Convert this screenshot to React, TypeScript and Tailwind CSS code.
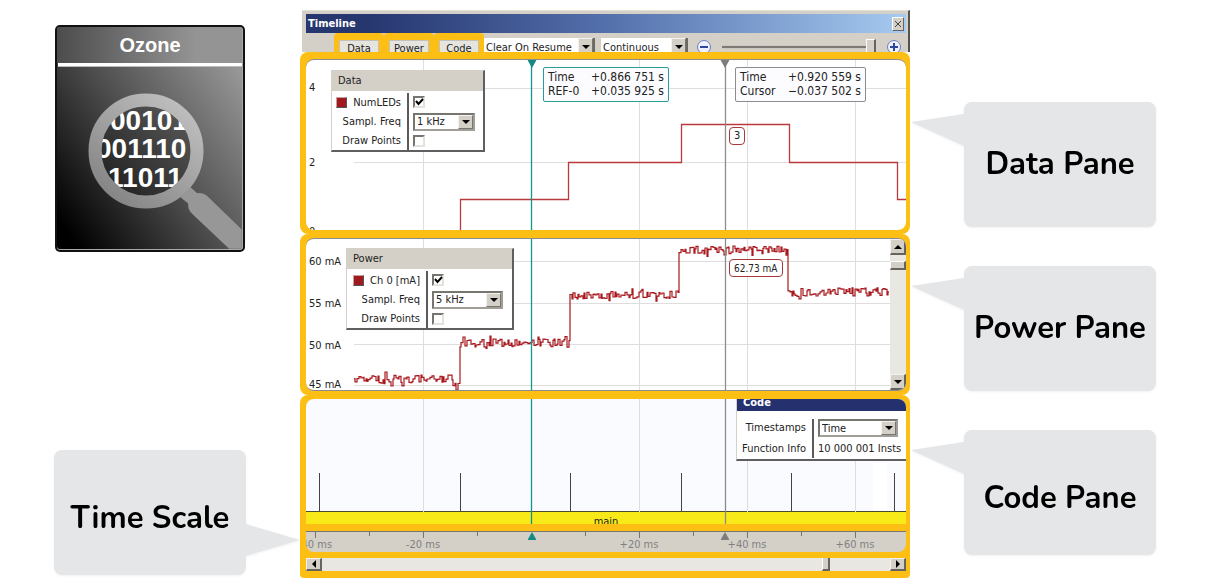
import type { ReactNode } from 'react';

const UI_FONT = "font-['DejaVu_Sans_Condensed','Noto_Sans',sans-serif]";

// Plot coordinates: 600 units wide, 0 ms sits at x = 225, 20 ms = 108 units
const GRID_X = [117, 333, 441, 549];
const REF_X = 225;
const CURSOR_X = 419;

const SCALE_LABELS = [
  { x: 9, text: '-40 ms' },
  { x: 117, text: '-20 ms' },
  { x: 333, text: '+20 ms' },
  { x: 441, text: '+40 ms' },
  { x: 549, text: '+60 ms' },
];
const MINOR_TICKS = [63, 171, 279, 387, 495];
const CODE_SPIKES = [13, 154, 264, 375, 485, 588];

const POWER_LEVELS = [
  { from: 48, to: 149, y: 140 },
  { from: 149, to: 154, y: 147 },
  { from: 154, to: 264, y: 104 },
  { from: 264, to: 373, y: 56 },
  { from: 373, to: 482, y: 11 },
  { from: 482, to: 583, y: 53 },
];

/** Stepped noise around each current level, seeded so it never changes. */
function powerPath(): string {
  let seed = 11;
  const rand = () => {
    seed = (seed * 16807) % 2147483647;
    return seed / 2147483647;
  };
  let d = '';
  for (const { from, to, y } of POWER_LEVELS) {
    for (let x = from; x < to; x += rand() > 0.4 ? 2 : 1) {
      const spread = rand() > 0.8 ? 14 : 8;
      const level = Math.round((y + (rand() - 0.5) * spread) * 10) / 10;
      d += d ? `H${x}V${level}` : `M${x} ${level}`;
    }
    d += `H${to}`;
  }
  return d;
}

const POWER_PATH = powerPath();

interface PlotProps {
  height: number;
  rows: number[];
  rowEnd?: number;
  children?: ReactNode;
}

function Plot({ height, rows, rowEnd = 600, children }: PlotProps) {
  return (
    <svg
      className="block h-full w-full"
      viewBox={`0 0 600 ${height}`}
      preserveAspectRatio="none"
      fill="none"
      aria-hidden="true"
    >
      <g stroke="#dedede">
        {GRID_X.map((x) => (
          <path key={x} d={`M${x}.5 0V${height}`} />
        ))}
        {rows.map((y) => (
          <path key={y} d={`M48 ${y}.5H${rowEnd}`} />
        ))}
      </g>
      {children}
      <path d={`M${REF_X}.5 0V${height}`} stroke="#0f9692" strokeWidth="1.300" />
      <path d={`M${CURSOR_X}.5 0V${height}`} stroke="#8c8c8c" strokeWidth="1.300" />
    </svg>
  );
}

function AxisLabels({ labels }: { labels: { y: number; text: string }[] }) {
  return (
    <>
      {labels.map(({ y, text }) => (
        <span
          key={text}
          className="absolute left-[3px] -translate-y-1/2 leading-4"
          style={{ top: y }}
        >
          {text}
        </span>
      ))}
    </>
  );
}

interface FrameProps {
  className: string;
  children: ReactNode;
}

/** Amber outline around one section of the timeline window. */
function Frame({ className, children }: FrameProps) {
  return <section className={`bg-[#fdbf13] pl-1.5 pr-1 ${className}`}>{children}</section>;
}

interface DropDownProps {
  id?: string;
  label?: string;
  value: string;
  className: string;
  flat?: boolean;
}

function DropDown({ id, label, value, className, flat = false }: DropDownProps) {
  const edge = flat
    ? 'border-r-2 border-[#6b6963]'
    : 'border-2 border-t-[#77756f] border-l-[#77756f] border-r-[#a19e97] border-b-[#a19e97]';
  return (
    <div className={`relative h-[18px] bg-white ${edge} ${className}`}>
      <select
        id={id}
        aria-label={label}
        className="block h-full w-full appearance-none bg-transparent pl-0.5 leading-none outline-none"
      >
        <option>{value}</option>
      </select>
      <span className="pointer-events-none absolute inset-y-0 right-0 flex w-[15px] items-center justify-center border border-t-[#f4f2ee] border-l-[#f4f2ee] border-r-[#77756f] border-b-[#77756f] bg-[#d4d0c8]">
        <svg width="8" height="4" viewBox="0 0 8 4" aria-hidden="true">
          <path d="M0 0H8L4 4Z" />
        </svg>
      </span>
    </div>
  );
}

function CheckBox({ id, checked = false }: { id: string; checked?: boolean }) {
  return (
    <span className="relative block size-3">
      <input
        id={id}
        type="checkbox"
        defaultChecked={checked}
        className="peer block size-3 appearance-none border-2 border-t-[#77756f] border-l-[#77756f] border-r-[#e4e2dc] border-b-[#e4e2dc] bg-white"
      />
      <svg
        className="pointer-events-none absolute inset-0 hidden size-3 peer-checked:block"
        viewBox="0 0 12 12"
        fill="none"
        aria-hidden="true"
      >
        <path d="M3 5L5.500 8L10 3" stroke="#000" strokeWidth="2" />
      </svg>
    </span>
  );
}

interface SettingsPanelProps {
  id: string;
  title: string;
  signal: string;
  freq: string;
  className: string;
  labelClass: string;
  selectClass: string;
}

function SettingsPanel({
  id,
  title,
  signal,
  freq,
  className,
  labelClass,
  selectClass,
}: SettingsPanelProps) {
  return (
    <div
      className={`absolute border border-t-[#d4d0c8] border-l-[#d4d0c8] border-r-2 border-b-2 border-r-[#5f5f5f] border-b-[#5f5f5f] bg-white ${className}`}
    >
      <h2 className="h-5 bg-[#d4d0c8] pl-1.5 leading-5">{title}</h2>
      <div className="flex pt-0.5">
        <div
          className={`flex flex-col items-end border-r-2 border-[#5a5a5a] pr-1.5 leading-[19px] ${labelClass}`}
        >
          <label htmlFor={`${id}-on`} className="flex items-center gap-1.5">
            <span className="size-[11px] border border-r-[#555] border-b-[#555] border-t-[#c9a0a0] border-l-[#c9a0a0] bg-[#a0191f]" />
            {signal}
          </label>
          <label htmlFor={`${id}-freq`}>Sampl. Freq</label>
          <label htmlFor={`${id}-points`}>Draw Points</label>
        </div>
        <div className="ml-1 flex flex-col justify-between py-[3px]">
          <CheckBox id={`${id}-on`} checked />
          <DropDown id={`${id}-freq`} value={freq} className={selectClass} />
          <CheckBox id={`${id}-points`} />
        </div>
      </div>
    </div>
  );
}

interface ReadoutProps {
  rows: [string, string][];
  className: string;
}

function Readout({ rows, className }: ReadoutProps) {
  return (
    <dl
      className={`absolute top-[7px] h-[35px] rounded-xs border bg-[#fcfcff] px-1 py-0.5 text-[12px] leading-[14px] ${className}`}
    >
      {rows.map(([name, value]) => (
        <div key={name} className="flex justify-between whitespace-nowrap">
          <dt>{name}</dt>
          <dd>{value}</dd>
        </div>
      ))}
    </dl>
  );
}

function Badge({ className, children }: { className: string; children: ReactNode }) {
  return (
    <span
      className={`absolute left-[423px] flex h-[18px] items-center rounded border border-[#a83a3e] bg-white px-1 ${className}`}
    >
      {children}
    </span>
  );
}

function Marker({ className, up = false }: { className: string; up?: boolean }) {
  return (
    <svg
      className={`absolute -translate-x-1/2 ${className}`}
      width="9"
      height="8"
      viewBox="0 0 9 8"
      fill="currentColor"
      aria-hidden="true"
    >
      <path d={up ? 'M4.500 0L9 8H0Z' : 'M0 0H9L4.500 8Z'} />
    </svg>
  );
}

const ARROWS = {
  up: 'M0 6L4 2L8 6Z',
  down: 'M0 2L4 6L8 2Z',
  left: 'M6 0L2 4L6 8Z',
  right: 'M2 0L6 4L2 8Z',
};

function ScrollButton({ dir, className }: { dir: keyof typeof ARROWS; className: string }) {
  return (
    <button
      type="button"
      aria-label={`Scroll ${dir}`}
      className={`flex shrink-0 items-center justify-center border border-t-[#f4f2ee] border-l-[#f4f2ee] border-r-2 border-b-2 border-r-[#66645f] border-b-[#66645f] bg-[#d4d0c8] ${className}`}
    >
      <svg width="8" height="8" viewBox="0 0 8 8" aria-hidden="true">
        <path d={ARROWS[dir]} />
      </svg>
    </button>
  );
}

function ZoomButton({ sign }: { sign: 'minus' | 'plus' }) {
  return (
    <button type="button" aria-label={sign === 'minus' ? 'Zoom out' : 'Zoom in'}>
      <svg className="block" width="16" height="16" viewBox="0 0 16 16" fill="none" aria-hidden="true">
        <circle cx="8" cy="8" r="6.500" fill="#eef1fb" stroke="#6a7fc8" />
        <path d={sign === 'minus' ? 'M4 8H12' : 'M4 8H12M8 4V12'} stroke="#2c479f" strokeWidth="2" />
      </svg>
    </button>
  );
}

function PaneTab({ children }: { children: ReactNode }) {
  return (
    <div className="w-[50px] rounded-t bg-[#fdbf13] px-[5px] pt-[7px]">
      <button
        type="button"
        className="block h-[17px] w-full border border-[#c4c1ba] bg-[#e6e4df] leading-4"
      >
        {children}
      </button>
    </div>
  );
}

interface CalloutProps {
  side: 'left' | 'right';
  low?: boolean;
  children: ReactNode;
}

function Callout({ side, low = false, children }: CalloutProps) {
  return (
    <div
      className={`relative flex h-[125px] items-center justify-center rounded-lg bg-[#e5e6e8] font-['Nunito','Noto_Sans',sans-serif] text-[31px] font-bold whitespace-nowrap text-black drop-shadow-xs ${
        low ? 'pt-3' : ''
      }`}
    >
      {side === 'left' ? (
        <svg className="absolute top-3 right-full" width="53" height="32" viewBox="0 0 53 32" aria-hidden="true">
          <path d="M0 8L53 0V32Z" fill="#e5e6e8" />
        </svg>
      ) : (
        <svg className="absolute top-[74px] left-full" width="54" height="32" viewBox="0 0 54 32" aria-hidden="true">
          <path d="M0 0L54 16L0 32Z" fill="#e5e6e8" />
        </svg>
      )}
      {children}
    </div>
  );
}

function OzoneLogo() {
  return (
    <svg
      className="mx-auto block"
      width="190"
      height="227"
      viewBox="0 0 190 227"
      fontFamily="'Liberation Sans', Arial, sans-serif"
      fontWeight="700"
      role="img"
      aria-label="Ozone"
    >
      <defs>
        <linearGradient id="card" x1="0.950" y1="0.150" x2="0.050" y2="0.920">
          <stop offset="0" stopColor="#979797" />
          <stop offset="0.500" stopColor="#4f4f4f" />
          <stop offset="1" stopColor="#000" />
        </linearGradient>
        <linearGradient id="head" x1="0" y1="0" x2="1" y2="0">
          <stop offset="0" stopColor="#4c4c4c" />
          <stop offset="0.750" stopColor="#949494" />
          <stop offset="1" stopColor="#949494" />
        </linearGradient>
        <linearGradient id="ring" x1="1" y1="0" x2="0.200" y2="1">
          <stop offset="0" stopColor="#c4c4c4" />
          <stop offset="1" stopColor="#858585" />
        </linearGradient>
        <linearGradient id="glass" x1="1" y1="0" x2="0" y2="1">
          <stop offset="0" stopColor="#5c5c5c" />
          <stop offset="1" stopColor="#1c1c1c" />
        </linearGradient>
        <clipPath id="lens">
          <circle cx="91" cy="126" r="45" />
        </clipPath>
      </defs>
      <rect width="190" height="227" rx="5" fill="#111" />
      <rect x="2" y="2" width="186" height="223" rx="3" fill="#a8a8a8" />
      <rect x="2" y="2" width="185" height="222" rx="3" fill="url(#card)" />
      <path d="M2 38V5Q2 2 5 2H184Q187 2 187 5V38Z" fill="url(#head)" />
      <rect x="3" y="38" width="184" height="3" fill="#fff" />
      <rect x="3" y="41" width="184" height="1" fill="#bbb" />
      <text x="95" y="27" fontSize="20" fill="#fff" textAnchor="middle">
        Ozone
      </text>
      <path
        transform="translate(-15 -15) scale(0.333)"
        d="M422 562L445 581Q443 598 456 611L568 717H606V659L506 562Q490 547 472 550L452 532Z"
        fill="#979797"
      />
      <circle cx="91" cy="126" r="45" fill="url(#glass)" />
      <g clipPath="url(#lens)" fontSize="28" fill="#fff">
        <text x="55" y="105">00101</text>
        <text x="41" y="133">001110</text>
        <text x="39" y="162">111011</text>
        <text x="86" y="190">1</text>
      </g>
      <circle cx="91" cy="126" r="51" fill="none" stroke="url(#ring)" strokeWidth="13" />
    </svg>
  );
}

function TitleAndToolbar() {
  return (
    <header className="ml-0.5 border-t border-r-2 border-t-[#e3e1dc] border-r-[#55534f] bg-[#d4d0c8] pt-[3px]">
      <div className="mr-0.5 ml-1 flex h-[19px] items-center justify-between bg-linear-to-r from-[#26366f] from-10% via-[#5470ac] via-50% to-[#a6caf0] pr-0.5 pl-0.5">
        <h1 className="pt-0.5 text-[11px] font-bold text-white">Timeline</h1>
        <button
          type="button"
          aria-label="Close"
          className="flex h-3.5 w-3 items-center justify-center border border-t-white border-l-white border-r-[#66645f] border-b-[#66645f] bg-[#d4d0c8]"
        >
          <svg width="6" height="6" viewBox="0 0 6 6" stroke="#444" aria-hidden="true">
            <path d="M0 0L6 6M6 0L0 6" />
          </svg>
        </button>
      </div>
      <div className="flex h-[19px] items-start overflow-hidden pr-1.5 pl-8">
        <PaneTab>Data</PaneTab>
        <PaneTab>Power</PaneTab>
        <PaneTab>Code</PaneTab>
        <div className="flex min-w-0 flex-1 items-center gap-1.5 pt-[5px]">
          <DropDown label="Clear mode" value="Clear On Resume" className="w-[111px] shrink-0" flat />
          <DropDown label="Sample mode" value="Continuous" className="w-[87px] shrink-0" flat />
          <div className="ml-0.5 flex min-w-0 flex-1 items-center gap-2.5">
            <ZoomButton sign="minus" />
            <input
              type="range"
              aria-label="Zoom"
              defaultValue={100}
              className="h-4 min-w-0 flex-1 appearance-none bg-linear-to-b from-transparent from-40% via-[#55534f] via-50% to-transparent to-60% [&::-webkit-slider-thumb]:h-4 [&::-webkit-slider-thumb]:w-2.5 [&::-webkit-slider-thumb]:appearance-none [&::-webkit-slider-thumb]:border [&::-webkit-slider-thumb]:border-r-2 [&::-webkit-slider-thumb]:border-t-white [&::-webkit-slider-thumb]:border-l-white [&::-webkit-slider-thumb]:border-r-[#66645f] [&::-webkit-slider-thumb]:bg-[#d4d0c8]"
            />
            <ZoomButton sign="plus" />
          </div>
        </div>
      </div>
    </header>
  );
}

function DataPane() {
  return (
    <Frame className="rounded-lg pt-[7px] pb-1">
      <div className="relative h-[171px] overflow-hidden rounded-lg border-t border-[#8c8c8c] bg-white">
        <Plot height={170} rows={[28, 102]}>
          <path
            d="M154.500 178V139.500H262.500V102.500H375.500V64.500H483.500V102.500H591.500V139.500H600"
            stroke="#b8383c"
            strokeWidth="1.300"
          />
        </Plot>
        <AxisLabels
          labels={[
            { y: 28, text: '4' },
            { y: 103, text: '2' },
            { y: 172, text: '0' },
          ]}
        />
        <Marker className="top-0 left-[37.600%] text-[#138a84]" />
        <Marker className="top-0 left-[69.900%] text-[#7d7d7d]" />
        <SettingsPanel
          id="data"
          title="Data"
          signal="NumLEDs"
          freq="1 kHz"
          className="top-2.5 left-[25px] w-[154px]"
          labelClass="w-[77px]"
          selectClass="w-[62px]"
        />
        <Readout
          rows={[
            ['Time', '+0.866 751 s'],
            ['REF-0', '+0.035 925 s'],
          ]}
          className="left-[237px] w-[126px] border-[#2a9d99]"
        />
        <Readout
          rows={[
            ['Time', '+0.920 559 s'],
            ['Cursor', '−0.037 502 s'],
          ]}
          className="left-[429px] w-[131px] border-[#8c8c8c]"
        />
        <Badge className="top-[67px]">3</Badge>
      </div>
    </Frame>
  );
}

function PowerPane() {
  return (
    <Frame className="rounded-lg py-1">
      <div className="relative flex h-[153px] overflow-hidden rounded-lg border-y border-[#8c8c8c] bg-white">
        <div className="absolute inset-0">
          <Plot height={151} rows={[22, 64, 105, 146]} rowEnd={584}>
            <path d={POWER_PATH} stroke="#a8181e" strokeWidth="1.200" />
          </Plot>
        </div>
        <AxisLabels
          labels={[
            { y: 23, text: '60 mA' },
            { y: 65, text: '55 mA' },
            { y: 107, text: '50 mA' },
            { y: 146, text: '45 mA' },
          ]}
        />
        <SettingsPanel
          id="power"
          title="Power"
          signal="Ch 0 [mA]"
          freq="5 kHz"
          className="top-[9px] left-10 w-[168px]"
          labelClass="w-[81px]"
          selectClass="w-[71px]"
        />
        <Badge className="top-5 text-[10px]">62.73 mA</Badge>
        <div className="relative ml-auto flex w-4 flex-col bg-[#e9e7e2]">
          <ScrollButton dir="up" className="h-4" />
          <div className="mt-1.5 h-[9px] border border-t-white border-l-white border-r-2 border-b-2 border-r-[#66645f] border-b-[#66645f] bg-[#d4d0c8]" />
          <ScrollButton dir="down" className="mt-auto h-4" />
        </div>
      </div>
    </Frame>
  );
}

function CodePane() {
  return (
    <Frame className="rounded-t-lg pt-1 pb-[3px]">
      <div className="relative h-[125px] overflow-hidden rounded-t-lg bg-[#fafbfe]">
        <div className="absolute inset-x-0 bottom-0 h-[13px] border-t border-[#4a4a30] bg-[#f8ea18] text-center leading-5">
          main
        </div>
        <div className="absolute inset-0">
          <Plot height={125} rows={[]}>
            <path d="M117.500 113V125M333.500 113V125M441.500 113V125M549.500 113V125" stroke="#f8ea18" />
            <path d="M567 64H581V111H567Z" fill="#fff" />
            <path d={CODE_SPIKES.map((x) => `M${x}.5 74V112`).join('')} stroke="#444" />
          </Plot>
        </div>
        <div className="absolute top-0 right-0 w-[170px] border-b-2 border-l border-b-[#5f5f5f] border-l-[#d4d0c8] bg-white">
          <h2 className="h-3 overflow-hidden bg-[#25316f] pl-1.5 leading-[8px] font-bold text-white">
            Code
          </h2>
          <div className="flex pt-2 pb-px">
            <div className="flex w-[77px] flex-col items-end border-r-2 border-[#5a5a5a] pr-1.5 leading-[18px] whitespace-nowrap">
              <label htmlFor="timestamps">Timestamps</label>
              <span className="pt-[3px]">Function Info</span>
            </div>
            <div className="ml-1 leading-[18px] whitespace-nowrap">
              <DropDown id="timestamps" value="Time" className="w-20" />
              <div className="pt-[3px]">10 000 001 Insts</div>
            </div>
          </div>
        </div>
      </div>
    </Frame>
  );
}

function TimeScale() {
  return (
    <Frame className="pt-1 pb-[3px]">
      <div className="relative h-[21px] overflow-hidden rounded-b-lg border-t border-[#77756f] bg-[#d4d0c8] text-[#808080]">
        <svg
          className="block h-full w-full"
          viewBox="0 0 600 20"
          preserveAspectRatio="none"
          stroke="#77756f"
          aria-hidden="true"
        >
          {SCALE_LABELS.map(({ x }) => (
            <path key={x} d={`M${x}.5 0V6`} />
          ))}
          {MINOR_TICKS.map((x) => (
            <path key={x} d={`M${x}.5 0V4`} />
          ))}
        </svg>
        {SCALE_LABELS.map(({ x, text }) => (
          <span
            key={text}
            className="absolute top-[5px] -translate-x-1/2 leading-4 whitespace-nowrap"
            style={{ left: `${x / 6}%` }}
          >
            {text}
          </span>
        ))}
        <Marker className="top-0 left-[37.600%] text-[#138a84]" up />
        <Marker className="top-0 left-[69.900%] text-[#7d7d7d]" up />
      </div>
    </Frame>
  );
}

function TimeScroll() {
  return (
    <Frame className="rounded-b pt-[3px] pb-[7px]">
      <div className="flex h-[13px] bg-[#e9e7e2]">
        <ScrollButton dir="left" className="w-4" />
        <div className="mr-[60px] ml-auto w-2 border border-t-0 border-l-white border-r-2 border-b-2 border-r-[#66645f] border-b-[#66645f] bg-[#d4d0c8]" />
        <ScrollButton dir="right" className="w-4" />
      </div>
    </Frame>
  );
}

export default function App() {
  return (
    <div className="flex min-h-screen w-full gap-[54px] bg-white px-[54px]">
      <aside className="flex w-48 shrink-0 flex-col justify-between pt-[25px] pb-1">
        <OzoneLogo />
        <Callout side="right" low>
          Time Scale
        </Callout>
      </aside>

      <main className={`min-w-0 flex-1 pt-2.5 text-[11px] text-[#222] ${UI_FONT}`}>
        <TitleAndToolbar />
        <DataPane />
        <PowerPane />
        <CodePane />
        <TimeScale />
        <TimeScroll />
      </main>

      <aside className="flex w-48 shrink-0 flex-col gap-[39px] pt-[102px]">
        <Callout side="left">Data Pane</Callout>
        <Callout side="left">Power Pane</Callout>
        <Callout side="left" low>
          Code Pane
        </Callout>
      </aside>
    </div>
  );
}
